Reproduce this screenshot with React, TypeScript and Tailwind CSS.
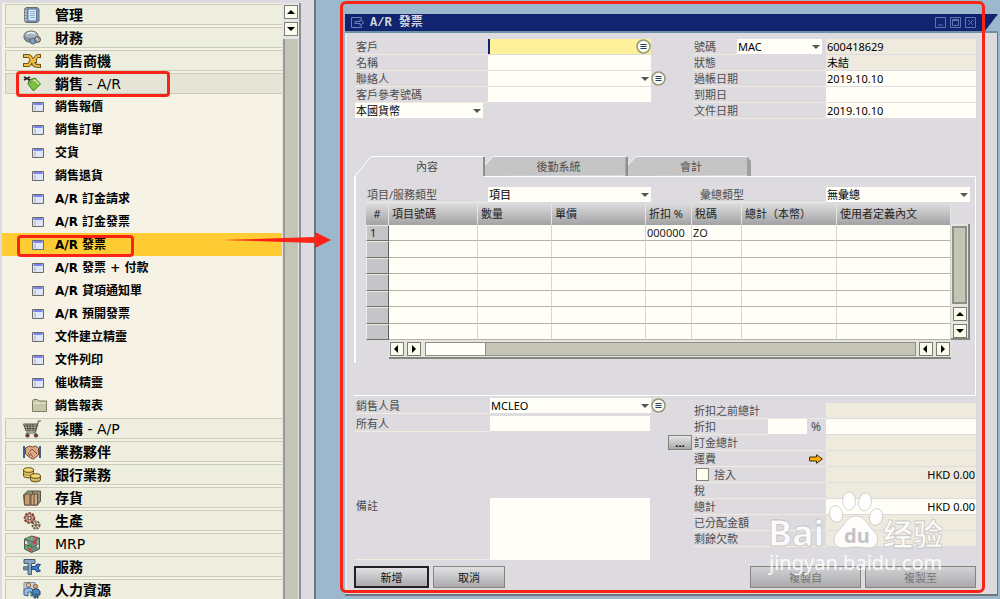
import { ReactNode } from "react";
import clsx from "clsx";

type MenuItem = {
  label: string;
  suffix?: string;
  icon: ReactNode;
  open?: boolean;
};

const Svg = ({ children }: { children: ReactNode }) => (
  <svg viewBox="0 0 18 18" className="size-[18px] shrink-0" aria-hidden="true">
    {children}
  </svg>
);

const AdminIcon = () => (
  <Svg>
    <path d="M3 1.500h11l2 1.500v12l-2 1.500H3L1.500 15V3z" fill="#8a97a3" stroke="#5f6b76" />
    <path d="M5 3h8.500v12H5z" fill="#d5e6f4" stroke="#54789a" />
    <path d="M7 5.500h5M7 7.500h5M7 9.500h5M7 11.500h5" stroke="#7fa6c9" strokeWidth="0.800" />
    <path d="M1.500 5h2M1.500 8h2M1.500 11h2M1.500 14h2" stroke="#eee" />
  </Svg>
);

const FinanceIcon = () => (
  <Svg>
    <ellipse cx="8" cy="6.500" rx="7" ry="4.500" fill="#a9b4bf" stroke="#66707a" />
    <path d="M1 7c0 5 3 6 6 6v-4" fill="#8593a1" stroke="#5c6670" />
    <path d="M4 5c2-2 6-2 8 0" stroke="#edf3f7" strokeWidth="1.500" fill="none" />
    <circle cx="10" cy="12" r="3" fill="#7da3c8" stroke="#4d6680" />
    <circle cx="14.500" cy="10.500" r="3" fill="#999" stroke="#555" />
    <path d="M13 9l3 3" stroke="#e6e6e6" />
  </Svg>
);

const ChainIcon = () => (
  <Svg>
    <path
      d="M0 4h5c4 0 2 5 6 5h3M0 13h5c3 0 1-4 5-5s2-4 5-4h3M10 9c0 5 3 5 8 5"
      fill="none"
      stroke="#6e5316"
      strokeWidth="4"
    />
    <path
      d="M1 4h4c4 0 2 5 6 5h2M1 13h4c3 0 1-4 5-5s2-4 5-4h2M10 9c0 5 3 5 7 5"
      fill="none"
      stroke="#f0bb42"
      strokeWidth="2.200"
    />
  </Svg>
);

const TagIcon = () => (
  <Svg>
    <path d="M6 5l6-2 5.500 6-7 7-5.500-7z" fill="#7dc043" stroke="#3f7a1d" />
    <path d="M9 6l3-1 4 4" stroke="#c8ec94" strokeWidth="1.500" fill="none" />
    <path d="M1 2l6 3M1 5l6-3" stroke="#222" strokeWidth="1.800" />
    <circle cx="8" cy="6" r="1.200" fill="#fff" stroke="#333" strokeWidth="0.700" />
  </Svg>
);

const CartIcon = () => (
  <Svg>
    <path d="M0.500 4h14l-2 7H3z" fill="#b9b7a2" stroke="#55564b" />
    <path
      d="M18 1h-2.500L12 13H3M4 4l1 7M7 4v7M10 4v7M1 6h13M2 8.500h11"
      fill="none"
      stroke="#55564b"
      strokeWidth="1.100"
    />
    <circle cx="4.500" cy="15.500" r="1.700" fill="#8d3e2c" stroke="#333" strokeWidth="0.800" />
    <circle cx="13" cy="15.500" r="1.700" fill="#8d3e2c" stroke="#333" strokeWidth="0.800" />
  </Svg>
);

const HandshakeIcon = () => (
  <Svg>
    <path d="M1 3v12M17 3v12" stroke="#3f618c" strokeWidth="2" />
    <path d="M2.500 5l4-2 3 1 3-1 3 2v7l-5 4-3-1-5-4z" fill="#dba785" stroke="#7a4a35" />
    <path d="M6 9l3-3 5 5M7 13l-2-3M10 14l-3-4" fill="none" stroke="#8b5540" />
  </Svg>
);

const CoinsIcon = () => (
  <Svg>
    <path d="M0.500 4v6c1 2.500 9 2.500 10 0V4z" fill="#bd9935" stroke="#66501c" />
    <ellipse cx="5.500" cy="4" rx="5" ry="2.300" fill="#f2d874" stroke="#66501c" />
    <path d="M1 6.500c1 2 8 2 9 0M1 9c1 2 8 2 9 0" fill="none" stroke="#f5e296" />
    <path d="M7.500 10v4c1 2.500 9 2.500 10 0v-4z" fill="#bd9935" stroke="#66501c" />
    <ellipse cx="12.500" cy="10" rx="5" ry="2.300" fill="#f2d874" stroke="#66501c" />
    <path d="M8 12.500c1 2 8 2 9 0" fill="none" stroke="#f5e296" />
  </Svg>
);

const BoxIcon = () => (
  <Svg>
    <path d="M0.500 6l4-4h13v10l-3 4h-13z" fill="#8f8f7f" stroke="#565648" />
    <path d="M1.500 7l1.500-2h4v11H1.500z" fill="#c79a6f" stroke="#6c523a" />
    <path d="M8 7l1.500-2h5V16H8z" fill="#d3a97e" stroke="#6c523a" />
    <path d="M10 2L9 5M11 5v11" stroke="#54483b" />
  </Svg>
);

const GearsIcon = () => (
  <Svg>
    <circle cx="6.500" cy="6" r="4.800" fill="#b98679" stroke="#7b3e36" strokeWidth="2" strokeDasharray="2.500 1" />
    <path d="M6.500 2v8M2.500 6h8" stroke="#e0c8bd" />
    <circle cx="6.500" cy="6" r="1.600" fill="#f3ebe1" stroke="#5e3a33" />
    <circle cx="13" cy="13" r="3.600" fill="#e2d8b9" stroke="#5f5946" strokeWidth="1.800" strokeDasharray="2 1" />
    <path d="M13 10.500v5M10.500 13h5" stroke="#554f3d" />
  </Svg>
);

const CubeIcon = () => (
  <Svg>
    <path d="M1.500 4l7-3 8 2v11l-8 3.500-7-3.500z" fill="#8c9a93" stroke="#4c5851" />
    <path d="M3 4l3-1.500 2 1-3 1.500zM2 10l3 1.500v3L2 13z" fill="#49c350" />
    <path d="M10 3l3-1 2 1-3 1zM10 6.500l3-1v3l-3 1zM6 12.500l2 1v3l-2-1z" fill="#e83f31" />
    <path d="M2 6l3 1v3L2 9zM13.500 9.500l2.500-1v3l-2.500 1z" fill="#d9e6ee" />
    <path d="M6 8l2.500 1v3L6 11zM10 12l3-1v3l-3 1z" fill="#39b048" />
    <path d="M9 6v11M2 4.500l7 2 7-3M2 9.500l7 2.500 7-3M5 5.500v10M13 4.500V15" fill="none" stroke="#4c5851" strokeWidth="0.700" />
  </Svg>
);

const ServiceIcon = () => (
  <Svg>
    <path d="M1 1.500h11v4H8.500v11H5v-11H1z" fill="#86a5c0" stroke="#455e76" />
    <path d="M8.500 8.500H12L14 6l3.500.5-2 2.500v2l2 2-3.500 1-2-2.500H8.500z" fill="#3c78c8" stroke="#1f4580" />
    <path d="M.5 8.500h5v3.500h-5z" fill="#6d8aa5" stroke="#455e76" strokeWidth="0.700" />
  </Svg>
);

const PeopleIcon = () => (
  <Svg>
    <path d="M1 1.500h11v9H1z" fill="#c9d7e4" stroke="#7f8f9d" />
    <circle cx="5.500" cy="4" r="2.200" fill="#e6c099" stroke="#69533e" strokeWidth="0.800" />
    <path d="M1 14V9l2-2h5l2 2v6H8v-4H5v4z" fill="#8fbfe6" stroke="#3d5d7c" />
    <circle cx="12.500" cy="5.500" r="2.200" fill="#d7a16d" stroke="#69533e" strokeWidth="0.800" />
    <path d="M9 13v-3l2-2h4l2 2v4h-2v3h-1v-4h-1v4h-2v-4z" fill="#4a86bd" stroke="#29496a" />
  </Svg>
);

const FormIcon = () => (
  <svg viewBox="0 0 12 10" className="mr-[11px] ml-[30px] h-[10px] w-3 shrink-0" aria-hidden="true">
    <path d="M.5.500h11v9H.5z" fill="#dfe6f8" stroke="#6a6a6a" />
    <path d="M1.500 2h9" stroke="#5d63f0" strokeWidth="1.500" />
    <path d="M3 4v4.500" stroke="#a8a8a8" />
  </svg>
);

const FolderIcon = () => (
  <svg viewBox="0 0 15 13" className="mr-2 ml-[30px] h-[13px] w-[15px] shrink-0" aria-hidden="true">
    <path d="M.5 12.500V2l1-1.500h4L7 2h7.500v10.500z" fill="#c7c8a8" stroke="#7c7d62" />
    <path d="M1 4h13" stroke="#ecedd6" />
  </svg>
);

const topMenu: MenuItem[] = [
  { label: "管理", icon: <AdminIcon /> },
  { label: "財務", icon: <FinanceIcon /> },
  { label: "銷售商機", icon: <ChainIcon /> },
  { label: "銷售", suffix: " - A/R", icon: <TagIcon />, open: true },
];

const salesMenu = [
  "銷售報價",
  "銷售訂單",
  "交貨",
  "銷售退貨",
  "A/R 訂金請求",
  "A/R 訂金發票",
  "A/R 發票",
  "A/R 發票 + 付款",
  "A/R 貸項通知單",
  "A/R 預開發票",
  "文件建立精靈",
  "文件列印",
  "催收精靈",
  "銷售報表",
];

const bottomMenu: MenuItem[] = [
  { label: "採購", suffix: " - A/P", icon: <CartIcon /> },
  { label: "業務夥伴", icon: <HandshakeIcon /> },
  { label: "銀行業務", icon: <CoinsIcon /> },
  { label: "存貨", icon: <BoxIcon /> },
  { label: "生產", icon: <GearsIcon /> },
  { label: "", suffix: "MRP", icon: <CubeIcon /> },
  { label: "服務", icon: <ServiceIcon /> },
  { label: "人力資源", icon: <PeopleIcon /> },
];

const MenuRow = ({ item }: { item: MenuItem }) => (
  <li className="relative h-[23px] py-px pl-[3px]">
    <a
      href="#"
      className={clsx(
        "flex h-full items-center gap-[14px] border border-r-0 border-[#c9ccb8] pl-[17px] text-sm leading-none",
        item.open ? "bg-[#e4e5d6]" : "bg-[#edeedd]"
      )}
    >
      {item.icon}
      <span className="whitespace-pre">
        <b>{item.label}</b>
        {item.suffix}
      </span>
    </a>
    {item.open && (
      <span className="pointer-events-none absolute -top-px left-[14px] h-[26px] w-[154px] rounded-sm border-[3px] border-[#fb2315]" />
    )}
  </li>
);

const SubMenuRow = ({ label }: { label: string }) => {
  const active = label === "A/R 發票";

  return (
    <li className={clsx("relative h-[23px]", active && "bg-[#ffcc33]")}>
      <a href="#" className="flex h-full items-center text-xs leading-none font-bold">
        {label === "銷售報表" ? <FolderIcon /> : <FormIcon />}
        {label}
      </a>
      {active && (
        <span className="pointer-events-none absolute top-[2px] left-[15px] h-[22px] w-[117px] rounded-sm border-[3px] border-[#fb2315]" />
      )}
    </li>
  );
};

const arrows = {
  up: "M4 0l4 4H0z",
  down: "M0 0h8L4 4z",
  left: "M5 0v8L1 4z",
  right: "M2 0v8l4-4z",
};

const ScrollButton = ({ dir }: { dir: keyof typeof arrows }) => (
  <button
    type="button"
    aria-label={dir}
    className="flex size-[14px] shrink-0 items-center justify-center border border-[#7d7d78] bg-[#fbfbec]"
  >
    <svg
      viewBox={dir === "up" || dir === "down" ? "0 0 8 4" : "0 0 8 8"}
      className={dir === "up" || dir === "down" ? "h-1 w-2" : "size-2"}
    >
      <path d={arrows[dir]} fill="#000" />
    </svg>
  </button>
);

const Sidebar = () => (
  <nav className="flex w-[316px] shrink-0 overflow-hidden border-r-2 border-[#6f7478] bg-[#dddbdf] pt-[3px] pl-[2px] font-['DejaVu_Sans','Noto_Sans_CJK_TC',sans-serif] text-black">
    <ul className="flex-1 bg-[#f6f2e6]">
      {topMenu.map((item) => (
        <MenuRow key={item.label} item={item} />
      ))}
      {salesMenu.map((label) => (
        <SubMenuRow key={label} label={label} />
      ))}
      {bottomMenu.map((item) => (
        <MenuRow key={item.label} item={item} />
      ))}
    </ul>
    <div className="mr-[13px] flex w-[19px] flex-col items-center gap-[3px] border-r-2 border-[#8f8f8f] bg-[#e6e5e3] pt-[2px]">
      <ScrollButton dir="up" />
      <ScrollButton dir="down" />
      <div className="w-[15px] flex-1 border-l-2 border-[#9a9a90] bg-[#c4c5b4]" />
    </div>
  </nav>
);

const Label = ({ id, text, className }: { id: string; text: string; className?: string }) => (
  <label
    htmlFor={id}
    className={clsx("h-4 shrink-0 border-b border-[#efecdf] pl-px whitespace-nowrap text-[#4d4d4d]", className)}
  >
    {text}
  </label>
);

type FieldProps = {
  id: string;
  value?: string;
  readOnly?: boolean;
  className?: string;
};

const Field = ({ id, value = "", readOnly, className }: FieldProps) => (
  <input
    id={id}
    defaultValue={value}
    readOnly={readOnly}
    className={clsx(
      "h-[15px] min-w-0 px-px text-black outline-none",
      readOnly ? "bg-[#eeeade]" : "bg-[#fffff8]",
      className
    )}
  />
);

const Select = ({ id, value = "", className }: FieldProps) => (
  <div className={clsx("relative h-[15px] shrink-0 bg-[#fffff8]", className)}>
    <select id={id} className="block h-[15px] w-full appearance-none pr-4 pl-px leading-[15px] text-black outline-none">
      <option>{value}</option>
    </select>
    <svg viewBox="0 0 8 4" className="pointer-events-none absolute top-[6px] right-[2px] h-1 w-2">
      <path d="M0 0h8L4 4z" fill="#555" />
    </svg>
  </div>
);

const PickButton = ({ label }: { label: string }) => (
  <button type="button" aria-label={label} className="h-[15px] shrink-0">
    <svg viewBox="0 0 15 15" className="size-[15px]">
      <circle cx="7.500" cy="7.500" r="6.500" fill="#fbfbec" stroke="#96967f" strokeWidth="1.500" />
      <path d="M4.500 5.500h6M4.500 7.500h6M4.500 9.500h6" stroke="#21396b" strokeWidth="1.100" />
    </svg>
  </button>
);

const TitleBar = () => (
  <div className="relative flex h-[19px] items-center border-b-2 border-[#6d91a8] bg-[#10246f] pr-[22px] pl-[6px]">
    <svg viewBox="0 0 14 11" className="h-[11px] w-[14px]" fill="none" stroke="#6f80b8">
      <path d="M10.500 2.500v-2h-10v10h10v-2M4 4.500h5v-2l4 3-4 3v-2H4z" />
    </svg>
    <h1 className="ml-[5px] flex-1 font-['Liberation_Mono','Noto_Sans_CJK_TC',monospace] text-xs leading-none font-bold text-[#d8d8dc]">
      A/R 發票
    </h1>
    <div className="flex gap-1">
      <button type="button" aria-label="最小化">
        <svg viewBox="0 0 11 11" className="size-[11px]" fill="none" stroke="#6073b3">
          <path d="M.5.500h10v10H.5zM3 8h5" />
        </svg>
      </button>
      <button type="button" aria-label="最大化">
        <svg viewBox="0 0 11 11" className="size-[11px]" fill="none" stroke="#6073b3">
          <path d="M.5.500h10v10H.5zM2.500 2.500h6v6h-6zM2.500 3.500h6" />
        </svg>
      </button>
      <button type="button" aria-label="關閉">
        <svg viewBox="0 0 11 11" className="size-[11px]" fill="none" stroke="#6073b3">
          <path d="M.5.500h10v10H.5zM3 3l5 5M8 3L3 8" />
        </svg>
      </button>
    </div>
    <svg viewBox="0 0 13 17" className="absolute top-0 right-0 h-[17px] w-[13px]">
      <path d="M13 0v17H0z" fill="#9cb8cd" />
    </svg>
  </div>
);

const HeaderForm = () => (
  <div className="flex justify-between">
    <div>
      <div className="flex h-4">
        <Label id="customer" text="客戶" className="w-[133px]" />
        <div className="relative w-[163px]">
          <Field id="customer" className="block w-full border-l-2 border-[#10246f] !bg-[#fff09a]" />
          <span className="absolute top-0 right-0">
            <PickButton label="選擇客戶" />
          </span>
        </div>
      </div>
      <div className="flex h-4">
        <Label id="name" text="名稱" className="w-[133px]" />
        <Field id="name" className="w-[163px]" />
      </div>
      <div className="flex h-4">
        <Label id="contact" text="聯絡人" className="w-[133px]" />
        <Select id="contact" className="w-[163px]" />
        <PickButton label="選擇聯絡人" />
      </div>
      <div className="flex h-4">
        <Label id="reference" text="客戶參考號碼" className="w-[133px]" />
        <Field id="reference" className="w-[163px]" />
      </div>
      <Select id="currency" value="本國貨幣" className="w-32" />
    </div>
    <div className="w-[283px]">
      <div className="flex h-4">
        <Label id="series" text="號碼" className="w-11" />
        <Select id="series" value="MAC" className="mr-1 w-[85px]" />
        <Field id="number" value="600418629" readOnly className="flex-1" />
      </div>
      <div className="flex h-4">
        <Label id="status" text="狀態" className="w-[133px]" />
        <Field id="status" value="未結" readOnly className="flex-1" />
      </div>
      <div className="flex h-4">
        <Label id="posting" text="過帳日期" className="w-[133px]" />
        <Field id="posting" value="2019.10.10" className="flex-1" />
      </div>
      <div className="flex h-4">
        <Label id="due" text="到期日" className="w-[133px]" />
        <Field id="due" className="flex-1" />
      </div>
      <div className="flex h-4">
        <Label id="document" text="文件日期" className="w-[133px]" />
        <Field id="document" value="2019.10.10" className="flex-1" />
      </div>
    </div>
  </div>
);

const Tabs = () => (
  <div className="relative z-10 flex h-5 text-[#4d4d4d]">
    <button type="button" className="relative w-[130px] pl-[14px]">
      <svg viewBox="0 0 130 21" className="absolute top-0 left-0 h-[21px] w-[130px]">
        <path d="M0 21L16 .5h113V21z" fill="#dddbdf" />
        <path d="M0 20L16 .5h113" fill="none" stroke="#fff" />
        <path d="M129 1v19" stroke="#8f8f8a" strokeWidth="2" />
      </svg>
      <span className="relative">內容</span>
    </button>
    <button type="button" className="relative w-[143px] pl-1">
      <svg viewBox="0 0 143 20" className="absolute top-0 left-0 h-5 w-[143px]">
        <path d="M0 20V9L8 1h133v18z" fill="#c5c5c5" />
        <path d="M0 9L8 .5h133" fill="none" stroke="#f4f4f4" />
        <path d="M142 1v19" stroke="#8f8f8a" strokeWidth="3" />
      </svg>
      <span className="relative">後勤系統</span>
    </button>
    <button type="button" className="relative w-[123px] pl-[3px]">
      <svg viewBox="0 0 123 20" className="absolute top-0 left-0 h-5 w-[123px]">
        <path d="M0 20V9L8 1h113v18z" fill="#c5c5c5" />
        <path d="M0 9L8 .5h112" fill="none" stroke="#f4f4f4" />
        <path d="M119 1l4 4v15h-4z" fill="#a0a09a" />
      </svg>
      <span className="relative">會計</span>
    </button>
  </div>
);

const columns = [
  { title: "#", width: "w-[23px]" },
  { title: "項目號碼", width: "w-[89px]" },
  { title: "數量", width: "w-[74px]" },
  { title: "單價", width: "w-[94px]" },
  { title: "折扣 %", width: "w-[46px]" },
  { title: "稅碼", width: "w-[50px]" },
  { title: "總計（本幣）", width: "w-[95px]" },
  { title: "使用者定義內文", width: "w-auto" },
];

const rows = [
  ["1", "", "", "", "000000", "ZO", "", ""],
  ["", "", "", "", "", "", "", ""],
  ["", "", "", "", "", "", "", ""],
  ["", "", "", "", "", "", "", ""],
  ["", "", "", "", "", "", "", ""],
  ["", "", "", "", "", "", "", ""],
  ["", "", "", "", "", "", "", ""],
];

const ItemsTable = () => (
  <div className="mt-px">
    <div className="flex items-end">
      <table className="h-[136px] flex-1 table-fixed border-separate border-spacing-0">
        <thead>
          <tr className="h-[21px]">
            {columns.map((col, i) => (
              <th
                key={col.title}
                className={clsx(
                  "overflow-hidden border-r border-[#e4e4e0] bg-gradient-to-b from-[#dcdbdc] to-[#a2a2a4] p-0 pb-[3px] font-normal whitespace-nowrap text-[#222]",
                  i === 0 ? "text-center" : "pl-[3px] text-left",
                  col.width
                )}
              >
                {col.title}
              </th>
            ))}
          </tr>
        </thead>
        <tbody>
          {rows.map((row, r) => (
            <tr key={r} className="h-4">
              {row.map((cell, c) => (
                <td
                  key={c}
                  className={clsx(
                    "border-r border-b p-0 leading-[14px] text-[#222]",
                    c === 0
                      ? "border-t border-l border-t-[#ecebe6] border-r-[#5f5f58] border-b-[#6f6f68] border-l-[#ecebe6] bg-[#c5c5c7] pl-[3px]"
                      : "border-r-[#d6d6cf] border-b-[#b4b3a6] bg-[#fffff8] pl-px"
                  )}
                >
                  {cell}
                </td>
              ))}
            </tr>
          ))}
        </tbody>
      </table>
      <div className="flex h-[116px] w-[19px] flex-col items-center gap-[3px] border-r-2 border-b-2 border-[#85857d] bg-[#e6e5e0] pt-[2px]">
        <div className="w-[15px] flex-1 border-2 border-[#8f8f8a] bg-[#c4c5b4]" />
        <ScrollButton dir="up" />
        <ScrollButton dir="down" />
      </div>
    </div>
    <div className="mr-[19px] ml-[23px] flex h-[19px] items-center gap-[3px] border-b-2 border-[#85857d] bg-[#e6e5e0] px-px">
      <ScrollButton dir="left" />
      <ScrollButton dir="right" />
      <div className="ml-px flex h-[14px] flex-1 border border-[#8f8f8a] bg-[#c4c5b4]">
        <div className="w-[60px] border-r border-[#8f8f8a] bg-[#fffff8]" />
      </div>
      <ScrollButton dir="left" />
      <ScrollButton dir="right" />
    </div>
  </div>
);

const ContentPanel = () => (
  <div className="-ml-px border-t border-r border-b border-white pb-8">
    <div className="border-l-2 border-white pt-[10px] pr-[5px] pb-1 pl-[10px]">
      <div className="flex h-4">
        <Label id="itemType" text="項目/服務類型" className="w-[122px]" />
        <Select id="itemType" value="項目" className="w-[163px]" />
        <Label id="summary" text="彙總類型" className="ml-auto w-[127px]" />
        <Select id="summary" value="無彙總" className="w-[144px]" />
      </div>
      <ItemsTable />
    </div>
  </div>
);

const totals = [
  { id: "before", label: "折扣之前總計", readOnly: true },
  { id: "discount", label: "折扣" },
  { id: "deposit", label: "訂金總計", readOnly: true },
  { id: "freight", label: "運費", readOnly: true },
  { id: "rounding", label: "捨入", value: "HKD 0.00", readOnly: true },
  { id: "tax", label: "稅", readOnly: true },
  { id: "total", label: "總計", value: "HKD 0.00" },
  { id: "applied", label: "已分配金額", readOnly: true },
  { id: "balance", label: "剩餘欠款", readOnly: true },
];

const Totals = () => (
  <div className="mt-[5px] w-[283px]">
    {totals.map((row) => (
      <div key={row.id} className="relative flex h-4">
        {row.id === "rounding" ? (
          <div className="flex w-[133px] items-center gap-[5px] border-b border-[#efecdf] pl-[3px]">
            <input
              id="roundingOn"
              type="checkbox"
              className="size-[13px] appearance-none border border-[#85857d] bg-[#fffff0]"
            />
            <label htmlFor="roundingOn" className="text-[#4d4d4d]">
              {row.label}
            </label>
          </div>
        ) : row.id === "discount" ? (
          <>
            <Label id="discountPct" text={row.label} className="w-[75px]" />
            <Field id="discountPct" className="w-[39px]" />
            <span className="w-[19px] pl-1 text-xs leading-[15px] text-[#4d4d4d]">%</span>
          </>
        ) : (
          <Label id={row.id} text={row.label} className="w-[133px]" />
        )}
        {row.id === "deposit" && (
          <button
            type="button"
            aria-label="訂金明細"
            className="absolute top-0 -left-[25px] h-[15px] w-6 border border-[#85857d] bg-gradient-to-b from-[#e6e6e8] to-[#a8a8aa] leading-[10px] font-bold"
          >
            ...
          </button>
        )}
        {row.id === "freight" && (
          <svg viewBox="0 0 14 10" className="absolute top-[3px] left-[116px] h-[10px] w-[14px]">
            <path d="M.6 3h7V.700L13.300 5 7.600 9.300V7h-7z" fill="#ffb000" stroke="#3d2a00" />
          </svg>
        )}
        <Field id={row.id} value={row.value} readOnly={row.readOnly} className="flex-1 text-right" />
      </div>
    ))}
  </div>
);

const Footer = () => (
  <div className="flex justify-between pt-[2px]">
    <div>
      <div className="flex h-[18px]">
        <Label id="salesman" text="銷售人員" className="w-[135px]" />
        <Select id="salesman" value="MCLEO" className="w-[161px]" />
        <PickButton label="選擇銷售人員" />
      </div>
      <div className="flex h-4">
        <Label id="owner" text="所有人" className="w-[135px]" />
        <Field id="owner" className="w-[160px]" />
      </div>
      <div className="mt-[66px] flex h-[62px]">
        <Label id="remarks" text="備註" className="h-full w-[135px]" />
        <textarea id="remarks" className="w-[160px] resize-none bg-[#fffff8] outline-none" />
      </div>
    </div>
    <Totals />
  </div>
);

const Actions = () => (
  <div className="mt-[6px] flex h-[22px] gap-1 text-[#111]">
    <button
      type="button"
      className="-ml-px w-[75px] border-2 border-[#222] bg-gradient-to-b from-[#e2e1e3] to-[#aaaaac] leading-none"
    >
      新增
    </button>
    <button
      type="button"
      className="w-[72px] border border-[#85857d] bg-gradient-to-b from-[#e2e1e3] to-[#aaaaac] leading-none"
    >
      取消
    </button>
    <button
      type="button"
      disabled
      className="ml-auto w-[111px] border border-[#85857d] bg-gradient-to-b from-[#d2d1d3] to-[#aaaaac] leading-none text-[#777]"
    >
      複製自
    </button>
    <button
      type="button"
      disabled
      className="w-[111px] border border-[#85857d] bg-gradient-to-b from-[#d2d1d3] to-[#aaaaac] leading-none text-[#777]"
    >
      複製至
    </button>
  </div>
);

const Watermark = () => (
  <svg
    viewBox="0 0 184 90"
    className="pointer-events-none absolute right-[48px] bottom-[16px] h-[90px] w-[184px] font-['Noto_Sans','Noto_Sans_CJK_SC',sans-serif]"
  >
    <g fill="#fff" fillOpacity="0.900" stroke="#a9a9a9" strokeOpacity="0.600" strokeWidth="0.800">
      <text x="2" y="56" fontSize="36" fontWeight="700">
        Bai
      </text>
      <ellipse cx="70" cy="24" rx="6.500" ry="8.500" transform="rotate(-12 70 24)" />
      <ellipse cx="83" cy="11" rx="6.500" ry="9" />
      <ellipse cx="99" cy="12" rx="6.500" ry="9" transform="rotate(8 99 12)" />
      <ellipse cx="110" cy="27" rx="6.500" ry="8.500" transform="rotate(14 110 27)" />
      <path d="M90 26c9 0 11 9 17 14 8 7 5 18-4 18-5 0-8-1-13-1s-8 1-13 1c-10 0-12-11-4-18 6-5 8-14 17-14z" />
      <text x="117" y="55" fontSize="30" fontWeight="700">
        经验
      </text>
    </g>
    <text x="3" y="80" fontSize="20" fill="#fff" fillOpacity="0.900">
      jingyan.baidu.com
    </text>
    <text x="78" y="53" fontSize="20" fontWeight="700" fill="#c4c3c4">
      du
    </text>
  </svg>
);

const InvoiceWindow = () => (
  <main className="relative mt-[14px] mr-[2px] ml-[29px] flex-1 self-start">
    <section className="border-b-2 border-[#6f7478] bg-[#dddbdf]">
      <TitleBar />
      <form className="border-r border-l-2 border-r-[#6f7478] border-l-[#ebebe8] pt-[6px] pr-[21px] pb-[6px] pl-2">
        <HeaderForm />
        <div className="mt-[37px]">
          <Tabs />
          <ContentPanel />
        </div>
        <Footer />
        <Actions />
      </form>
    </section>
    <Watermark />
    <div className="pointer-events-none absolute -top-[13px] right-[13px] bottom-[3px] -left-[5px] rounded-md border-[3px] border-[#fb2315]" />
  </main>
);

const App = () => {
  return (
    <div className="relative flex h-screen overflow-hidden bg-[#9cb8cd] font-['Noto_Sans','Noto_Sans_CJK_TC',sans-serif] text-[11px] leading-[15px]">
      <Sidebar />
      <InvoiceWindow />
      <svg viewBox="0 0 110 16" className="pointer-events-none absolute top-[232px] left-[221px] h-4 w-[110px]">
        <path d="M0 8l94-3V0l16 8-16 8v-5z" fill="#fb2315" />
      </svg>
    </div>
  );
};

export default App;
